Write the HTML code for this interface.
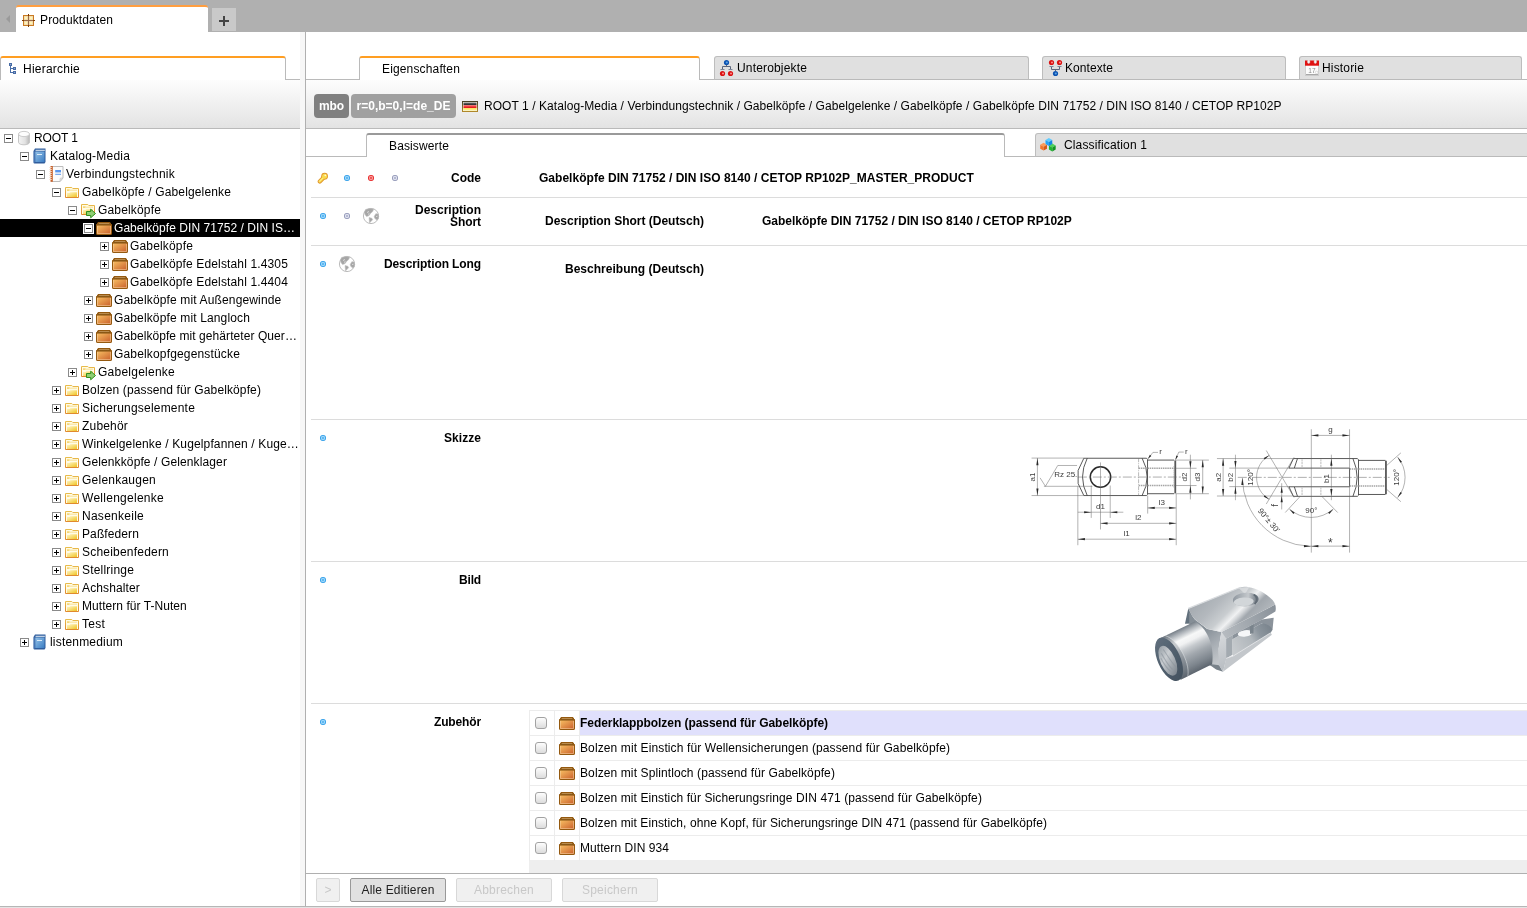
<!DOCTYPE html>
<html lang="de"><head><meta charset="utf-8"><title>Produktdaten</title>
<style>
html,body{margin:0;padding:0;}
body{width:1527px;height:908px;overflow:hidden;background:#fff;position:relative;font-family:"Liberation Sans",sans-serif;font-size:12px;color:#000;}
div,span,i,svg{position:absolute;box-sizing:border-box;}
span,div{white-space:nowrap;}
#app{left:0;top:0;width:1527px;height:908px;will-change:transform;background:#fff;}
.defs{width:0;height:0;overflow:hidden;}
/* top bar */
#topbar{left:0;top:0;width:1527px;height:32px;background:#b0b0b0;}
#maintab{left:16px;top:5px;width:192px;height:27px;background:#fff;border-top:2px solid #ff9e40;border-radius:3px 3px 0 0;}
#maintab .lbl{left:24px;top:6px;line-height:14px;}
#plus{left:212px;top:8px;width:24px;height:23px;background:#c9c9c9;}
#plus i{background:#444;}
#larr{left:6px;top:15px;width:0;height:0;border-right:4px solid #9a9a9a;border-top:4px solid transparent;border-bottom:4px solid transparent;}
/* left panel */
#lsplit{left:300px;top:32px;width:5px;height:874px;background:#f7f7f7;}
#lsplitb{left:305px;top:32px;width:1px;height:874px;background:#b0b0b0;}
#htab{left:0;top:56px;width:286px;height:24px;border-top:2px solid #ff9e22;border-right:1px solid #bababa;border-left:1px solid #bababa;border-radius:3px 3px 0 0;background:#fff;}
#htab .lbl{left:22px;top:4px;line-height:14px;}
#htabline{left:285px;top:79px;width:15px;height:1px;background:#bababa;}
#ltool{left:0;top:80px;width:300px;height:48px;background:linear-gradient(#fdfdfd,#e3e3e3);}
#ltoolb{left:0;top:128px;width:300px;height:1px;background:#bababa;}
.trow{left:0;width:300px;height:18px;}
.trow.sel{background:#000;color:#fff;}
.exp{top:5px;width:9px;height:9px;border:1px solid #8a8a8a;background:#fff;}
.sel .exp{outline:1px solid #fff;}
.exp .h{left:1px;top:3px;width:5px;height:1px;background:#000;}
.exp .v{left:3px;top:1px;width:1px;height:5px;background:#000;}
.tic{top:0;}
.ttx{top:2px;line-height:14px;}
/* right panel */
.tabline{height:1px;background:#bababa;}
#etab{left:359px;top:56px;width:341px;height:24px;border-top:2px solid #ff9e22;border-left:1px solid #bababa;border-right:1px solid #bababa;border-radius:3px 3px 0 0;background:#fff;}
#etab .lbl{left:22px;top:4px;line-height:14px;}
.gtab{top:56px;height:24px;background:#e0e0e0;border:1px solid #bdbdbd;border-bottom:1px solid #bababa;border-radius:3px 3px 0 0;}
.gtab .lbl{top:4px;line-height:14px;}
#rtool{left:306px;top:80px;width:1221px;height:48px;background:linear-gradient(#fdfdfd,#e3e3e3);}
#rtoolb{left:306px;top:128px;width:1221px;height:1px;background:#bababa;}
.badge{top:94px;height:24px;border-radius:4px;color:#fff;font-weight:bold;line-height:24px;text-align:center;}
#crumb{left:484px;top:99px;line-height:14px;}
#btab{left:366px;top:133px;width:639px;height:24px;border-top:2px solid #9a9a9a;border-left:1px solid #bababa;border-right:1px solid #bababa;border-radius:3px 3px 0 0;background:#fff;}
#btab .lbl{left:22px;top:4px;line-height:14px;}
#ctab{left:1035px;top:133px;width:500px;height:24px;background:#e0e0e0;border:1px solid #bdbdbd;border-bottom:1px solid #bababa;border-radius:3px 0 0 0;}
#ctab .lbl{left:28px;top:4px;line-height:14px;}
.sep{left:311px;width:1216px;height:1px;background:#dcdcdc;}
.lab{font-weight:bold;text-align:right;line-height:12px;}
.b{font-weight:bold;}
.dot{width:6px;height:6px;border-radius:50%;}
.dot.bl{background:radial-gradient(circle,#62b8f0 0,#62b8f0 18%,#9ad6fa 34%,#9ad6fa 44%,#2599e8 62%,#168ce0 100%);}
.dot.rd{background:radial-gradient(circle,#f05a5a 0,#f05a5a 18%,#f89a9a 34%,#f89a9a 44%,#e61a1a 62%,#dc0c0c 100%);}
.dot.gr{background:radial-gradient(circle,#b4b9d2 0,#b4b9d2 18%,#dfe1ee 34%,#dfe1ee 44%,#8a90b2 62%,#7c83a8 100%);}
/* accessories */
#atab{left:529px;top:710px;width:998px;height:163px;background:#eee;}
.arow{left:529px;width:998px;height:25px;background:#fff;border-top:1px solid #ececec;}
.arow .cb{left:6px;top:6px;width:12px;height:12px;border:1px solid #a2a2a2;border-radius:3px;background:linear-gradient(#fdfdfd,#dcdcdc);}
.arow .aic{left:30px;top:3px;}
.arow .atx{left:51px;top:5px;line-height:14px;}
.arow.first .atx{font-weight:bold;}
.arow .hl{display:none;}
.arow.first .hl{display:block;left:51px;top:0;width:947px;height:24px;background:#e0e0fc;}
.vline{width:1px;background:#ececec;top:710px;height:151px;}
/* bottom bar */
#bbar{left:306px;top:873px;width:1221px;height:1px;background:#b0b0b0;}
.btn{top:878px;height:24px;border:1px solid #d8d8d8;background:#f0f0f0;color:#c8c8c8;border-radius:2px;line-height:22px;text-align:center;}
.btn.on{border-color:#999;background:#e1e1e1;color:#222;}
#botline{left:0;top:906px;width:1527px;height:2px;background:linear-gradient(#b6b6b6 50%,#e4e4e4 50%);}

</style></head>
<body>
<svg class="defs" width="0" height="0" aria-hidden="true"><defs>
<linearGradient id="g-box" x1="0" y1="0" x2="1" y2="1"><stop offset="0" stop-color="#f7bd62"/><stop offset="1" stop-color="#c9602c"/></linearGradient>
<linearGradient id="g-boxt" x1="0" y1="0" x2="0" y2="1"><stop offset="0" stop-color="#7e4d0e"/><stop offset="1" stop-color="#c48a3c"/></linearGradient>
<linearGradient id="g-fold" x1="0" y1="0" x2="1" y2="1"><stop offset="0" stop-color="#fff6c8"/><stop offset="1" stop-color="#f0c524"/></linearGradient>
<linearGradient id="g-folds" x1="0" y1="0" x2="0" y2="1"><stop offset="0" stop-color="#e8bc4c"/><stop offset="1" stop-color="#e08a2e"/></linearGradient>
<linearGradient id="g-book" x1="0" y1="0" x2="1" y2="1"><stop offset="0" stop-color="#94c2e8"/><stop offset="1" stop-color="#3a7cc2"/></linearGradient>
<linearGradient id="g-cyl" x1="0" y1="0" x2="1" y2="0"><stop offset="0" stop-color="#f4f4f4"/><stop offset=".6" stop-color="#e2e2e2"/><stop offset="1" stop-color="#b8b8b8"/></linearGradient>
<linearGradient id="g-flagb" x1="0" y1="0" x2="0" y2="1"><stop offset="0" stop-color="#4a4226"/><stop offset="1" stop-color="#b0882a"/></linearGradient>
<linearGradient id="g-fk" x1="0" y1="0" x2="0" y2="1"><stop offset="0" stop-color="#7a7a7a"/><stop offset="1" stop-color="#1c1c1c"/></linearGradient>
<linearGradient id="g-fr" x1="0" y1="0" x2="0" y2="1"><stop offset="0" stop-color="#ff6a6a"/><stop offset="1" stop-color="#e00c0c"/></linearGradient>
<linearGradient id="g-fy" x1="0" y1="0" x2="0" y2="1"><stop offset="0" stop-color="#ffe24a"/><stop offset="1" stop-color="#fff6a0"/></linearGradient>
</defs></svg>

<div id="app">
<div id="topbar"></div>
<div id="larr"></div>
<div id="maintab"><svg style="left:6px;top:7px" width="14" height="14" viewBox="0 0 14 14"><rect x="1.500" y="1.500" width="10" height="10" fill="#f3d9ae" stroke="#c97a22"/><circle cx="4" cy="4" r="1.300" fill="#fff5b4"/><circle cx="9" cy="4" r="1.300" fill="#fff5b4"/><circle cx="4" cy="9" r="1.300" fill="#fff5b4"/><circle cx="9" cy="9" r="1.300" fill="#fff5b4"/><path d="M6 1h1v11h-1zM1 6h11v1h-11z" fill="#9a6a48"/><path d="M6 0h1v2h-1zM6 11h1v2h-1zM0 6h2v1h-2zM11 6h2v1h-2z" fill="#7c3c04"/></svg><span class="lbl" style="letter-spacing:0.135px">Produktdaten</span></div>
<div id="plus"><i style="left:7px;top:12px;width:10px;height:2px"></i><i style="left:11px;top:8px;width:2px;height:10px"></i></div>

<div id="htab"><svg style="left:7px;top:5px" width="10" height="13" viewBox="0 0 10 13"><path d="M2 3h1v7h-1zM3 5h2v1h-2zM3 9h2v1h-2z" fill="#4a6fa8"/><path d="M1 0h3v3h-3zM5 4h3v3h-3zM5 8h3v3h-3z" fill="#486ca6"/><path d="M2 1h1v1h-1zM6 5h1v1h-1zM6 9h1v1h-1z" fill="#8fa9d0"/></svg><span class="lbl" style="letter-spacing:0.231px">Hierarchie</span></div>
<div id="htabline"></div>
<div id="ltool"></div><div id="ltoolb"></div>
<div class="trow" style="top:129px"><span class="exp" style="left:4px"><i class="h"></i></span><svg class="tic" style="left:16px" width="16" height="18" viewBox="0 0 16 18"><path d="M2.500 5v8.300c0 1.500 2.500 2.500 5.500 2.500s5.500-1 5.500-2.500v-8.300" fill="url(#g-cyl)" stroke="#c6c6c6"/><ellipse cx="8" cy="5" rx="5.500" ry="2.600" fill="#fdfdfd" stroke="#cccccc"/></svg><span class="ttx" style="left:34px;letter-spacing:-0.112px">ROOT 1</span></div>
<div class="trow" style="top:147px"><span class="exp" style="left:20px"><i class="h"></i></span><svg class="tic" style="left:32px" width="16" height="18" viewBox="0 0 16 18"><path d="M3 1.500h10.500v13.500l-1 1.500h-10a1 1 0 0 1-1-1v-11.500z" fill="#2f5c9c"/><path d="M3.300 2.500h9.700v1.400h-10.300z" fill="#3a68a8"/><path d="M3.600 3.300h9.200" stroke="#f4f8fc" stroke-width=".9"/><rect x="3.300" y="4.500" width="9.200" height="10.500" fill="url(#g-book)"/><path d="M2.200 4.500v11" stroke="#5a8cc8" stroke-width=".8"/><rect x="5" y="7" width="5" height="1" fill="#dcecf8"/></svg><span class="ttx" style="left:50px;letter-spacing:0.202px">Katalog-Media</span></div>
<div class="trow" style="top:165px"><span class="exp" style="left:36px"><i class="h"></i></span><svg class="tic" style="left:48px" width="16" height="18" viewBox="0 0 16 18"><path d="M3.500 1.500h11.500v11.500l-3 3.500h-8.500z" fill="#fbfbfb" stroke="#bcbcbc"/><path d="M15 13l-3 3.500v-2.500a1 1 0 0 1 1-1z" fill="#e2e2e2" stroke="#c0c0c0" stroke-width=".6"/><rect x="2.500" y="1" width="2.300" height="15.800" fill="#c8602a"/><path d="M1.200 2.500h2.600M1.200 4.500h2.600M1.200 6.500h2.600M1.200 8.500h2.600M1.200 10.500h2.600M1.200 12.500h2.600M1.200 14.500h2.600" stroke="#f6e2d0" stroke-width=".9"/><rect x="7.200" y="5" width="5.800" height="2.400" fill="#5a96ec"/><rect x="7.200" y="8.800" width="5.800" height="1" fill="#5a96ec"/></svg><span class="ttx" style="left:66px;letter-spacing:0.237px">Verbindungstechnik</span></div>
<div class="trow" style="top:183px"><span class="exp" style="left:52px"><i class="h"></i></span><svg class="tic" style="left:64px" width="16" height="18" viewBox="0 0 16 18"><path d="M1.500 4.500h6.300l1 1h5.700v9h-13z" fill="#fffbe6" stroke="url(#g-folds)"/><path d="M3 6.200h2.300l.5.600h7.200v.8h-7.600l-.5.500h-1.900z" fill="#f6d777"/><path d="M3 10h2.600l.7-.7h6.700v4.700h-10z" fill="url(#g-fold)"/></svg><span class="ttx" style="left:82px;letter-spacing:0.143px">Gabelköpfe / Gabelgelenke</span></div>
<div class="trow" style="top:201px"><span class="exp" style="left:68px"><i class="h"></i></span><svg class="tic" style="left:80px" width="16" height="18" viewBox="0 0 16 18"><path d="M1.500 3.500h6.300l1 1h5.700v9h-13z" fill="#fffbe6" stroke="url(#g-folds)"/><path d="M3 5.200h2.300l.5.600h7.200v.8h-7.600l-.5.500h-1.900z" fill="#f6d777"/><path d="M3 9h2.600l.7-.7h6.700v4.700h-10z" fill="url(#g-fold)"/><path d="M6.500 10.500h4.200v-2.300l4.800 4.300-4.800 4.300v-2.300h-4.200z" fill="#8fce72" stroke="#2f8f1c" stroke-linejoin="round"/></svg><span class="ttx" style="left:98px;letter-spacing:0.162px">Gabelköpfe</span></div>
<div class="trow sel" style="top:219px"><span class="exp" style="left:84px"><i class="h"></i></span><svg class="tic" style="left:96px" width="16" height="18" viewBox="0 0 16 18"><path d="M2.200 3.500h11.600l1.700 2.600v8.400a1 1 0 0 1-1 1h-13a1 1 0 0 1-1-1v-8.400z" fill="url(#g-boxt)" stroke="#94590f"/><path d="M2.600 4.500h10.800" stroke="#c79a5e" stroke-width=".8" fill="none"/><rect x="1" y="6.600" width="14" height="8.400" fill="url(#g-box)"/><path d="M1.500 7v7.500h13v-7.500" fill="none" stroke="#f6d2a2" stroke-opacity=".55"/><path d="M2.200 3.500h11.600l1.700 2.600v8.400a1 1 0 0 1-1 1h-13a1 1 0 0 1-1-1v-8.400z" fill="none" stroke="#94590f"/></svg><span class="ttx" style="left:114px;letter-spacing:0.053px">Gabelköpfe DIN 71752 / DIN IS…</span></div>
<div class="trow" style="top:237px"><span class="exp" style="left:100px"><i class="h"></i><i class="v"></i></span><svg class="tic" style="left:112px" width="16" height="18" viewBox="0 0 16 18"><path d="M2.200 3.500h11.600l1.700 2.600v8.400a1 1 0 0 1-1 1h-13a1 1 0 0 1-1-1v-8.400z" fill="url(#g-boxt)" stroke="#94590f"/><path d="M2.600 4.500h10.800" stroke="#c79a5e" stroke-width=".8" fill="none"/><rect x="1" y="6.600" width="14" height="8.400" fill="url(#g-box)"/><path d="M1.500 7v7.500h13v-7.500" fill="none" stroke="#f6d2a2" stroke-opacity=".55"/><path d="M2.200 3.500h11.600l1.700 2.600v8.400a1 1 0 0 1-1 1h-13a1 1 0 0 1-1-1v-8.400z" fill="none" stroke="#94590f"/></svg><span class="ttx" style="left:130px;letter-spacing:0.162px">Gabelköpfe</span></div>
<div class="trow" style="top:255px"><span class="exp" style="left:100px"><i class="h"></i><i class="v"></i></span><svg class="tic" style="left:112px" width="16" height="18" viewBox="0 0 16 18"><path d="M2.200 3.500h11.600l1.700 2.600v8.400a1 1 0 0 1-1 1h-13a1 1 0 0 1-1-1v-8.400z" fill="url(#g-boxt)" stroke="#94590f"/><path d="M2.600 4.500h10.800" stroke="#c79a5e" stroke-width=".8" fill="none"/><rect x="1" y="6.600" width="14" height="8.400" fill="url(#g-box)"/><path d="M1.500 7v7.500h13v-7.500" fill="none" stroke="#f6d2a2" stroke-opacity=".55"/><path d="M2.200 3.500h11.600l1.700 2.600v8.400a1 1 0 0 1-1 1h-13a1 1 0 0 1-1-1v-8.400z" fill="none" stroke="#94590f"/></svg><span class="ttx" style="left:130px;letter-spacing:0.144px">Gabelköpfe Edelstahl 1.4305</span></div>
<div class="trow" style="top:273px"><span class="exp" style="left:100px"><i class="h"></i><i class="v"></i></span><svg class="tic" style="left:112px" width="16" height="18" viewBox="0 0 16 18"><path d="M2.200 3.500h11.600l1.700 2.600v8.400a1 1 0 0 1-1 1h-13a1 1 0 0 1-1-1v-8.400z" fill="url(#g-boxt)" stroke="#94590f"/><path d="M2.600 4.500h10.800" stroke="#c79a5e" stroke-width=".8" fill="none"/><rect x="1" y="6.600" width="14" height="8.400" fill="url(#g-box)"/><path d="M1.500 7v7.500h13v-7.500" fill="none" stroke="#f6d2a2" stroke-opacity=".55"/><path d="M2.200 3.500h11.600l1.700 2.600v8.400a1 1 0 0 1-1 1h-13a1 1 0 0 1-1-1v-8.400z" fill="none" stroke="#94590f"/></svg><span class="ttx" style="left:130px;letter-spacing:0.144px">Gabelköpfe Edelstahl 1.4404</span></div>
<div class="trow" style="top:291px"><span class="exp" style="left:84px"><i class="h"></i><i class="v"></i></span><svg class="tic" style="left:96px" width="16" height="18" viewBox="0 0 16 18"><path d="M2.200 3.500h11.600l1.700 2.600v8.400a1 1 0 0 1-1 1h-13a1 1 0 0 1-1-1v-8.400z" fill="url(#g-boxt)" stroke="#94590f"/><path d="M2.600 4.500h10.800" stroke="#c79a5e" stroke-width=".8" fill="none"/><rect x="1" y="6.600" width="14" height="8.400" fill="url(#g-box)"/><path d="M1.500 7v7.500h13v-7.500" fill="none" stroke="#f6d2a2" stroke-opacity=".55"/><path d="M2.200 3.500h11.600l1.700 2.600v8.400a1 1 0 0 1-1 1h-13a1 1 0 0 1-1-1v-8.400z" fill="none" stroke="#94590f"/></svg><span class="ttx" style="left:114px;letter-spacing:0.145px">Gabelköpfe mit Außengewinde</span></div>
<div class="trow" style="top:309px"><span class="exp" style="left:84px"><i class="h"></i><i class="v"></i></span><svg class="tic" style="left:96px" width="16" height="18" viewBox="0 0 16 18"><path d="M2.200 3.500h11.600l1.700 2.600v8.400a1 1 0 0 1-1 1h-13a1 1 0 0 1-1-1v-8.400z" fill="url(#g-boxt)" stroke="#94590f"/><path d="M2.600 4.500h10.800" stroke="#c79a5e" stroke-width=".8" fill="none"/><rect x="1" y="6.600" width="14" height="8.400" fill="url(#g-box)"/><path d="M1.500 7v7.500h13v-7.500" fill="none" stroke="#f6d2a2" stroke-opacity=".55"/><path d="M2.200 3.500h11.600l1.700 2.600v8.400a1 1 0 0 1-1 1h-13a1 1 0 0 1-1-1v-8.400z" fill="none" stroke="#94590f"/></svg><span class="ttx" style="left:114px;letter-spacing:0.141px">Gabelköpfe mit Langloch</span></div>
<div class="trow" style="top:327px"><span class="exp" style="left:84px"><i class="h"></i><i class="v"></i></span><svg class="tic" style="left:96px" width="16" height="18" viewBox="0 0 16 18"><path d="M2.200 3.500h11.600l1.700 2.600v8.400a1 1 0 0 1-1 1h-13a1 1 0 0 1-1-1v-8.400z" fill="url(#g-boxt)" stroke="#94590f"/><path d="M2.600 4.500h10.800" stroke="#c79a5e" stroke-width=".8" fill="none"/><rect x="1" y="6.600" width="14" height="8.400" fill="url(#g-box)"/><path d="M1.500 7v7.500h13v-7.500" fill="none" stroke="#f6d2a2" stroke-opacity=".55"/><path d="M2.200 3.500h11.600l1.700 2.600v8.400a1 1 0 0 1-1 1h-13a1 1 0 0 1-1-1v-8.400z" fill="none" stroke="#94590f"/></svg><span class="ttx" style="left:114px;letter-spacing:0.072px">Gabelköpfe mit gehärteter Quer…</span></div>
<div class="trow" style="top:345px"><span class="exp" style="left:84px"><i class="h"></i><i class="v"></i></span><svg class="tic" style="left:96px" width="16" height="18" viewBox="0 0 16 18"><path d="M2.200 3.500h11.600l1.700 2.600v8.400a1 1 0 0 1-1 1h-13a1 1 0 0 1-1-1v-8.400z" fill="url(#g-boxt)" stroke="#94590f"/><path d="M2.600 4.500h10.800" stroke="#c79a5e" stroke-width=".8" fill="none"/><rect x="1" y="6.600" width="14" height="8.400" fill="url(#g-box)"/><path d="M1.500 7v7.500h13v-7.500" fill="none" stroke="#f6d2a2" stroke-opacity=".55"/><path d="M2.200 3.500h11.600l1.700 2.600v8.400a1 1 0 0 1-1 1h-13a1 1 0 0 1-1-1v-8.400z" fill="none" stroke="#94590f"/></svg><span class="ttx" style="left:114px;letter-spacing:0.162px">Gabelkopfgegenstücke</span></div>
<div class="trow" style="top:363px"><span class="exp" style="left:68px"><i class="h"></i><i class="v"></i></span><svg class="tic" style="left:80px" width="16" height="18" viewBox="0 0 16 18"><path d="M1.500 3.500h6.300l1 1h5.700v9h-13z" fill="#fffbe6" stroke="url(#g-folds)"/><path d="M3 5.200h2.300l.5.600h7.200v.8h-7.600l-.5.500h-1.900z" fill="#f6d777"/><path d="M3 9h2.600l.7-.7h6.700v4.700h-10z" fill="url(#g-fold)"/><path d="M6.500 10.500h4.200v-2.300l4.800 4.300-4.800 4.300v-2.300h-4.200z" fill="#8fce72" stroke="#2f8f1c" stroke-linejoin="round"/></svg><span class="ttx" style="left:98px;letter-spacing:0.245px">Gabelgelenke</span></div>
<div class="trow" style="top:381px"><span class="exp" style="left:52px"><i class="h"></i><i class="v"></i></span><svg class="tic" style="left:64px" width="16" height="18" viewBox="0 0 16 18"><path d="M1.500 4.500h6.300l1 1h5.700v9h-13z" fill="#fffbe6" stroke="url(#g-folds)"/><path d="M3 6.200h2.300l.5.600h7.200v.8h-7.600l-.5.500h-1.900z" fill="#f6d777"/><path d="M3 10h2.600l.7-.7h6.700v4.700h-10z" fill="url(#g-fold)"/></svg><span class="ttx" style="left:82px;letter-spacing:0.115px">Bolzen (passend für Gabelköpfe)</span></div>
<div class="trow" style="top:399px"><span class="exp" style="left:52px"><i class="h"></i><i class="v"></i></span><svg class="tic" style="left:64px" width="16" height="18" viewBox="0 0 16 18"><path d="M1.500 4.500h6.300l1 1h5.700v9h-13z" fill="#fffbe6" stroke="url(#g-folds)"/><path d="M3 6.200h2.300l.5.600h7.200v.8h-7.600l-.5.500h-1.900z" fill="#f6d777"/><path d="M3 10h2.600l.7-.7h6.700v4.700h-10z" fill="url(#g-fold)"/></svg><span class="ttx" style="left:82px;letter-spacing:0.200px">Sicherungselemente</span></div>
<div class="trow" style="top:417px"><span class="exp" style="left:52px"><i class="h"></i><i class="v"></i></span><svg class="tic" style="left:64px" width="16" height="18" viewBox="0 0 16 18"><path d="M1.500 4.500h6.300l1 1h5.700v9h-13z" fill="#fffbe6" stroke="url(#g-folds)"/><path d="M3 6.200h2.300l.5.600h7.200v.8h-7.600l-.5.500h-1.900z" fill="#f6d777"/><path d="M3 10h2.600l.7-.7h6.700v4.700h-10z" fill="url(#g-fold)"/></svg><span class="ttx" style="left:82px;letter-spacing:0.186px">Zubehör</span></div>
<div class="trow" style="top:435px"><span class="exp" style="left:52px"><i class="h"></i><i class="v"></i></span><svg class="tic" style="left:64px" width="16" height="18" viewBox="0 0 16 18"><path d="M1.500 4.500h6.300l1 1h5.700v9h-13z" fill="#fffbe6" stroke="url(#g-folds)"/><path d="M3 6.200h2.300l.5.600h7.200v.8h-7.600l-.5.500h-1.900z" fill="#f6d777"/><path d="M3 10h2.600l.7-.7h6.700v4.700h-10z" fill="url(#g-fold)"/></svg><span class="ttx" style="left:82px;letter-spacing:0.135px">Winkelgelenke / Kugelpfannen / Kuge…</span></div>
<div class="trow" style="top:453px"><span class="exp" style="left:52px"><i class="h"></i><i class="v"></i></span><svg class="tic" style="left:64px" width="16" height="18" viewBox="0 0 16 18"><path d="M1.500 4.500h6.300l1 1h5.700v9h-13z" fill="#fffbe6" stroke="url(#g-folds)"/><path d="M3 6.200h2.300l.5.600h7.200v.8h-7.600l-.5.500h-1.900z" fill="#f6d777"/><path d="M3 10h2.600l.7-.7h6.700v4.700h-10z" fill="url(#g-fold)"/></svg><span class="ttx" style="left:82px;letter-spacing:0.117px">Gelenkköpfe / Gelenklager</span></div>
<div class="trow" style="top:471px"><span class="exp" style="left:52px"><i class="h"></i><i class="v"></i></span><svg class="tic" style="left:64px" width="16" height="18" viewBox="0 0 16 18"><path d="M1.500 4.500h6.300l1 1h5.700v9h-13z" fill="#fffbe6" stroke="url(#g-folds)"/><path d="M3 6.200h2.300l.5.600h7.200v.8h-7.600l-.5.500h-1.900z" fill="#f6d777"/><path d="M3 10h2.600l.7-.7h6.700v4.700h-10z" fill="url(#g-fold)"/></svg><span class="ttx" style="left:82px;letter-spacing:0.237px">Gelenkaugen</span></div>
<div class="trow" style="top:489px"><span class="exp" style="left:52px"><i class="h"></i><i class="v"></i></span><svg class="tic" style="left:64px" width="16" height="18" viewBox="0 0 16 18"><path d="M1.500 4.500h6.300l1 1h5.700v9h-13z" fill="#fffbe6" stroke="url(#g-folds)"/><path d="M3 6.200h2.300l.5.600h7.200v.8h-7.600l-.5.500h-1.900z" fill="#f6d777"/><path d="M3 10h2.600l.7-.7h6.700v4.700h-10z" fill="url(#g-fold)"/></svg><span class="ttx" style="left:82px;letter-spacing:0.269px">Wellengelenke</span></div>
<div class="trow" style="top:507px"><span class="exp" style="left:52px"><i class="h"></i><i class="v"></i></span><svg class="tic" style="left:64px" width="16" height="18" viewBox="0 0 16 18"><path d="M1.500 4.500h6.300l1 1h5.700v9h-13z" fill="#fffbe6" stroke="url(#g-folds)"/><path d="M3 6.200h2.300l.5.600h7.200v.8h-7.600l-.5.500h-1.900z" fill="#f6d777"/><path d="M3 10h2.600l.7-.7h6.700v4.700h-10z" fill="url(#g-fold)"/></svg><span class="ttx" style="left:82px;letter-spacing:0.263px">Nasenkeile</span></div>
<div class="trow" style="top:525px"><span class="exp" style="left:52px"><i class="h"></i><i class="v"></i></span><svg class="tic" style="left:64px" width="16" height="18" viewBox="0 0 16 18"><path d="M1.500 4.500h6.300l1 1h5.700v9h-13z" fill="#fffbe6" stroke="url(#g-folds)"/><path d="M3 6.200h2.300l.5.600h7.200v.8h-7.600l-.5.500h-1.900z" fill="#f6d777"/><path d="M3 10h2.600l.7-.7h6.700v4.700h-10z" fill="url(#g-fold)"/></svg><span class="ttx" style="left:82px;letter-spacing:0.107px">Paßfedern</span></div>
<div class="trow" style="top:543px"><span class="exp" style="left:52px"><i class="h"></i><i class="v"></i></span><svg class="tic" style="left:64px" width="16" height="18" viewBox="0 0 16 18"><path d="M1.500 4.500h6.300l1 1h5.700v9h-13z" fill="#fffbe6" stroke="url(#g-folds)"/><path d="M3 6.200h2.300l.5.600h7.200v.8h-7.600l-.5.500h-1.900z" fill="#f6d777"/><path d="M3 10h2.600l.7-.7h6.700v4.700h-10z" fill="url(#g-fold)"/></svg><span class="ttx" style="left:82px;letter-spacing:0.210px">Scheibenfedern</span></div>
<div class="trow" style="top:561px"><span class="exp" style="left:52px"><i class="h"></i><i class="v"></i></span><svg class="tic" style="left:64px" width="16" height="18" viewBox="0 0 16 18"><path d="M1.500 4.500h6.300l1 1h5.700v9h-13z" fill="#fffbe6" stroke="url(#g-folds)"/><path d="M3 6.200h2.300l.5.600h7.200v.8h-7.600l-.5.500h-1.900z" fill="#f6d777"/><path d="M3 10h2.600l.7-.7h6.700v4.700h-10z" fill="url(#g-fold)"/></svg><span class="ttx" style="left:82px;letter-spacing:0.197px">Stellringe</span></div>
<div class="trow" style="top:579px"><span class="exp" style="left:52px"><i class="h"></i><i class="v"></i></span><svg class="tic" style="left:64px" width="16" height="18" viewBox="0 0 16 18"><path d="M1.500 4.500h6.300l1 1h5.700v9h-13z" fill="#fffbe6" stroke="url(#g-folds)"/><path d="M3 6.200h2.300l.5.600h7.200v.8h-7.600l-.5.500h-1.900z" fill="#f6d777"/><path d="M3 10h2.600l.7-.7h6.700v4.700h-10z" fill="url(#g-fold)"/></svg><span class="ttx" style="left:82px;letter-spacing:0.130px">Achshalter</span></div>
<div class="trow" style="top:597px"><span class="exp" style="left:52px"><i class="h"></i><i class="v"></i></span><svg class="tic" style="left:64px" width="16" height="18" viewBox="0 0 16 18"><path d="M1.500 4.500h6.300l1 1h5.700v9h-13z" fill="#fffbe6" stroke="url(#g-folds)"/><path d="M3 6.200h2.300l.5.600h7.200v.8h-7.600l-.5.500h-1.900z" fill="#f6d777"/><path d="M3 10h2.600l.7-.7h6.700v4.700h-10z" fill="url(#g-fold)"/></svg><span class="ttx" style="left:82px;letter-spacing:0.051px">Muttern für T-Nuten</span></div>
<div class="trow" style="top:615px"><span class="exp" style="left:52px"><i class="h"></i><i class="v"></i></span><svg class="tic" style="left:64px" width="16" height="18" viewBox="0 0 16 18"><path d="M1.500 4.500h6.300l1 1h5.700v9h-13z" fill="#fffbe6" stroke="url(#g-folds)"/><path d="M3 6.200h2.300l.5.600h7.200v.8h-7.600l-.5.500h-1.900z" fill="#f6d777"/><path d="M3 10h2.600l.7-.7h6.700v4.700h-10z" fill="url(#g-fold)"/></svg><span class="ttx" style="left:82px;letter-spacing:0.244px">Test</span></div>
<div class="trow" style="top:633px"><span class="exp" style="left:20px"><i class="h"></i><i class="v"></i></span><svg class="tic" style="left:32px" width="16" height="18" viewBox="0 0 16 18"><path d="M3 1.500h10.500v13.500l-1 1.500h-10a1 1 0 0 1-1-1v-11.500z" fill="#2f5c9c"/><path d="M3.300 2.500h9.700v1.400h-10.300z" fill="#3a68a8"/><path d="M3.600 3.300h9.200" stroke="#f4f8fc" stroke-width=".9"/><rect x="3.300" y="4.500" width="9.200" height="10.500" fill="url(#g-book)"/><path d="M2.200 4.500v11" stroke="#5a8cc8" stroke-width=".8"/><rect x="5" y="7" width="5" height="1" fill="#dcecf8"/></svg><span class="ttx" style="left:50px;letter-spacing:0.192px">listenmedium</span></div>
<div id="lsplit"></div><div id="lsplitb"></div>

<div class="tabline" style="left:306px;top:79px;width:1221px"></div>
<div id="etab"><span class="lbl" style="letter-spacing:0.150px">Eigenschaften</span></div>
<div class="gtab" style="left:714px;width:315px"><svg style="left:4px;top:2px" width="16" height="18" viewBox="0 0 16 18"><path d="M7.500 6v1.500M3.500 10.500v-3h8v3" fill="none" stroke="#5c667c" stroke-width="1"/><path d="M1.500 10.500h4M9.500 10.500h4" fill="none" stroke="#7c8698" stroke-width="1"/><circle cx="7.500" cy="3.500" r="2.600" fill="#0c52b2"/><circle cx="7.800" cy="3.500" r="1.100" fill="#5aa4e2"/><circle cx="3.500" cy="14.500" r="2.600" fill="#da1212"/><circle cx="4" cy="14.500" r="1" fill="#ff8c8c"/><circle cx="11.500" cy="14.500" r="2.600" fill="#da1212"/><circle cx="12" cy="14.500" r="1" fill="#ff8c8c"/></svg><span class="lbl" style="letter-spacing:0.163px;left:22px">Unterobjekte</span></div>
<div class="gtab" style="left:1042px;width:244px"><svg style="left:5px;top:2px" width="16" height="18" viewBox="0 0 16 18"><path d="M7.500 12v-1.500M3.500 7.500v3h8v-3" fill="none" stroke="#5c667c" stroke-width="1"/><path d="M1.500 7.500h4M9.500 7.500h4" fill="none" stroke="#7c8698" stroke-width="1"/><circle cx="7.500" cy="14.500" r="2.600" fill="#0c52b2"/><circle cx="7.800" cy="14.500" r="1.100" fill="#5aa4e2"/><circle cx="3.500" cy="3.500" r="2.600" fill="#da1212"/><circle cx="4" cy="3.500" r="1" fill="#ff8c8c"/><circle cx="11.500" cy="3.500" r="2.600" fill="#da1212"/><circle cx="12" cy="3.500" r="1" fill="#ff8c8c"/></svg><span class="lbl" style="letter-spacing:0.079px;left:22px">Kontexte</span></div>
<div class="gtab" style="left:1299px;width:223px"><svg style="left:4px;top:3px" width="16" height="16" viewBox="0 0 16 16"><rect x="1" y="1" width="14" height="14.500" fill="#fcfcfc"/><rect x="1" y="14" width="14" height="1.500" fill="#a8a8a8"/><path d="M1.500 1v14" stroke="#d0d0d0"/><path d="M14.500 1v14" stroke="#d0d0d0"/><rect x="1" y=".5" width="14" height="5.200" fill="#e01212"/><rect x="3.500" y="0" width="2.400" height="3.400" rx="1.100" fill="#f2f2f2" stroke="#d8d8d8" stroke-width=".4"/><rect x="10.100" y="0" width="2.400" height="3.400" rx="1.100" fill="#f2f2f2" stroke="#d8d8d8" stroke-width=".4"/><text x="4.300" y="12.600" font-family="Liberation Sans,sans-serif" font-size="6.500" fill="#8a8a8a">17</text><circle cx="12.600" cy="12.400" r="1.300" fill="#fff" stroke="#c8c8c8" stroke-width=".6"/></svg><span class="lbl" style="letter-spacing:0.166px;left:22px">Historie</span></div>
<div id="rtool"></div><div id="rtoolb"></div>
<div class="badge" style="letter-spacing:-0.110px;left:314px;width:35px;background:#808080">mbo</div>
<div class="badge" style="letter-spacing:0.019px;left:351px;width:105px;background:#a0a0a0">r=0,b=0,l=de_DE</div>
<svg style="left:462px;top:101px" width="16" height="11" viewBox="0 0 16 11"><rect x=".5" y=".5" width="15" height="10" fill="#f4f0dc" stroke="url(#g-flagb)"/><rect x="1.500" y="1.500" width="13" height="2.700" fill="url(#g-fk)"/><rect x="1.500" y="4.200" width="13" height="2.900" fill="url(#g-fr)"/><rect x="1.500" y="7.100" width="13" height="2.400" fill="url(#g-fy)"/></svg>
<span id="crumb" style="letter-spacing:0.062px">ROOT 1 / Katalog-Media / Verbindungstechnik / Gabelköpfe / Gabelgelenke / Gabelköpfe / Gabelköpfe DIN 71752 / DIN ISO 8140 / CETOP RP102P</span>

<div class="tabline" style="left:306px;top:156px;width:1221px"></div>
<div id="btab"><span class="lbl" style="letter-spacing:0.131px">Basiswerte</span></div>
<div id="ctab"><svg style="left:4px;top:3px" width="16" height="16" viewBox="0 0 16 16"><path d="M3.60 5.80 L6.98 7.75 L3.60 9.70 L0.22 7.75z" fill="#ff9c58"/><path d="M0.22 7.75 L3.60 9.70 L3.60 13.60 L0.22 11.65z" fill="#f4762a"/><path d="M6.98 7.75 L3.60 9.70 L3.60 13.60 L6.98 11.65z" fill="#d85a14"/><path d="M12.30 6.60 L15.68 8.55 L12.30 10.50 L8.92 8.55z" fill="#4fd25a"/><path d="M8.92 8.55 L12.30 10.50 L12.30 14.40 L8.92 12.45z" fill="#1fb430"/><path d="M15.68 8.55 L12.30 10.50 L12.30 14.40 L15.68 12.45z" fill="#129422"/><path d="M8.90 1.10 L12.28 3.05 L8.90 5.00 L5.52 3.05z" fill="#62ccff"/><path d="M5.52 3.05 L8.90 5.00 L8.90 8.90 L5.52 6.95z" fill="#22a4f8"/><path d="M12.28 3.05 L8.90 5.00 L8.90 8.90 L12.28 6.95z" fill="#1488e0"/></svg><span class="lbl" style="letter-spacing:0.144px">Classification 1</span></div>

<!-- row: Code -->
<svg style="left:317px;top:172px" width="12" height="12" viewBox="0 0 12 12"><path d="M2.800 9.400l3.700-3.700" stroke="#e0962c" stroke-width="4.200" stroke-linecap="round" fill="none"/><circle cx="7.600" cy="4.200" r="3.400" fill="#e0962c"/><path d="M2.800 9.400l3.700-3.700" stroke="#f9da4e" stroke-width="2.400" stroke-linecap="round" fill="none"/><circle cx="7.600" cy="4.200" r="2.500" fill="#f9da4e"/><circle cx="8.300" cy="3.300" r=".9" fill="#fff7d0"/><path d="M2.500 9.300l3-3" stroke="#fff2a8" stroke-width=".8" stroke-linecap="round"/></svg>
<div class="dot bl" style="left:344px;top:175px"></div>
<div class="dot rd" style="left:368px;top:175px"></div>
<div class="dot gr" style="left:392px;top:175px"></div>
<span class="lab" style="letter-spacing:0.000px;left:381px;width:100px;top:172px">Code</span>
<span class="b" style="letter-spacing:0.027px;left:539px;top:171px;line-height:14px">Gabelköpfe DIN 71752 / DIN ISO 8140 / CETOP RP102P_MASTER_PRODUCT</span>
<div class="sep" style="top:197px"></div>

<!-- row: Description Short -->
<div class="dot bl" style="left:320px;top:213px"></div>
<div class="dot gr" style="left:344px;top:213px"></div>
<svg style="left:362px;top:207px" width="18" height="18" viewBox="0 0 18 18"><circle cx="9" cy="9" r="7.600" fill="#fff" stroke="#b4b4b4" stroke-width=".9"/><path d="M3.600 2.500L8.100 1.400L11.700 2.200L10.600 4.600L8.500 6.400L7.100 8.500L4.600 9.600L3.200 7.800L2.300 5.300zM7.100 10.600L9.900 11.300L10.600 12.700L8.900 14.500L7.600 15.900L7.300 13.400zM13.800 6.700L16.200 7.100L16.700 9.600L16.200 12L14.800 13.100L12.700 11.300L12.200 9.600z" fill="#a6a6a6" stroke="#bdbdbd" stroke-width=".6"/><path d="M5 5.500l2-1M6 7.500l1.500-1.200M14 9.500l1.500-.3" stroke="#e8e8e8" stroke-width=".8"/></svg>
<span class="lab" style="letter-spacing:-0.001px;left:381px;width:100px;top:204px">Description</span>
<span class="lab" style="letter-spacing:-0.066px;left:381px;width:100px;top:216px">Short</span>
<span class="lab" style="letter-spacing:-0.013px;left:504px;width:200px;top:215px">Description Short (Deutsch)</span>
<span class="b" style="letter-spacing:0.002px;left:762px;top:214px;line-height:14px">Gabelköpfe DIN 71752 / DIN ISO 8140 / CETOP RP102P</span>
<div class="sep" style="top:245px"></div>

<!-- row: Description Long -->
<div class="dot bl" style="left:320px;top:261px"></div>
<svg style="left:338px;top:255px" width="18" height="18" viewBox="0 0 18 18"><circle cx="9" cy="9" r="7.600" fill="#fff" stroke="#b4b4b4" stroke-width=".9"/><path d="M3.600 2.500L8.100 1.400L11.700 2.200L10.600 4.600L8.500 6.400L7.100 8.500L4.600 9.600L3.200 7.800L2.300 5.300zM7.100 10.600L9.900 11.300L10.600 12.700L8.900 14.500L7.600 15.900L7.300 13.400zM13.800 6.700L16.200 7.100L16.700 9.600L16.200 12L14.800 13.100L12.700 11.300L12.200 9.600z" fill="#a6a6a6" stroke="#bdbdbd" stroke-width=".6"/><path d="M5 5.500l2-1M6 7.500l1.500-1.200M14 9.500l1.500-.3" stroke="#e8e8e8" stroke-width=".8"/></svg>
<span class="lab" style="letter-spacing:-0.104px;left:331px;width:150px;top:258px">Description Long</span>
<span class="lab" style="letter-spacing:0.014px;left:504px;width:200px;top:263px">Beschreibung (Deutsch)</span>
<div class="sep" style="top:419px"></div>

<!-- row: Skizze -->
<div class="dot bl" style="left:320px;top:435px"></div>
<span class="lab" style="letter-spacing:0.052px;left:381px;width:100px;top:432px">Skizze</span>
<svg id="sketch" style="left:1025px;top:424px" width="392" height="134" viewBox="1025 424 392 134" font-family="Liberation Sans,sans-serif" fill="#3a3a3a">
<style>#sketch path{fill:none;stroke:#3c3c3c}#sketch .th{stroke-width:.85;stroke:#3c3c3c}#sketch .th2{stroke-width:1.800;stroke:#585858}#sketch .th3{fill:none;stroke:#2a2a2a;stroke-width:1.500}#sketch .tn{stroke-width:.5;stroke:#666}#sketch .tg{stroke-width:.5;stroke:#9a9a9a}#sketch .ds{stroke-width:.6;stroke:#8a8a8a;stroke-dasharray:1.200 .8}#sketch .td{stroke-width:1.500;stroke:#a4a4a4;stroke-dasharray:1.500 .7}#sketch .cl{stroke-width:.55;stroke:#6a6a6a;stroke-dasharray:9 2 2 2}#sketch .ar{fill:#2a2a2a;stroke:none}#sketch .hd{stroke-width:1.100;stroke:#c4c4c4;stroke-dasharray:2.200 .6}#sketch .cl2{stroke-width:.5;stroke:#777;stroke-dasharray:4 1 1 1}</style>
<path class="th" d="M1083.84 458.24 L1146.60 458.24 L1147.53 459.48 L1147.53 494.48 L1146.60 495.56 L1083.84 495.56 L1078.13 483.53 L1078.13 470.42 Z"/>
<path class="th" d="M1087.23 458.24 Q1077.83 476.90 1087.23 495.56"/>
<path class="th" d="M1142.13 458.24 Q1152.15 476.90 1142.13 495.56"/>
<path class="cl2" d="M1138.58 458.24 L1138.58 495.56"/>
<path class="th" d="M1147.68 460.09 L1174.20 460.09"/>
<path class="th" d="M1147.68 493.71 L1174.20 493.71"/>
<path class="th2" d="M1175.28 460.40 L1175.28 493.40"/>
<path class="td" d="M1138.74 468.27 L1174.20 468.27"/>
<path class="td" d="M1138.74 485.54 L1174.20 485.54"/>
<path class="ds" d="M1173.89 466.26 L1173.89 487.85"/>
<circle class="th3" cx="1100.49" cy="477.05" r="10.18"/>
<path class="cl" d="M1077.83 477.05 L1181.91 477.05"/>
<path class="tn" d="M1100.49 462.41 L1100.49 529.48"/>
<path class="tn" d="M1031.57 458.09 L1083.99 458.09"/>
<path class="tn" d="M1031.57 495.56 L1083.99 495.56"/>
<path class="tn" d="M1037.42 458.09 L1037.42 495.56"/>
<path class="ar" d="M1037.42 458.09 L1038.50 465.18 L1036.35 465.18 Z"/>
<path class="ar" d="M1037.42 495.56 L1036.35 488.47 L1038.50 488.47 Z"/>
<text x="1034.96" y="477.05" font-size="8" text-anchor="middle" transform="rotate(-90 1034.96 477.05)">a1</text>
<path class="tn" d="M1040.05 477.83 L1045.44 486.31 L1057.78 465.49 L1077.05 465.49"/>
<path class="tn" d="M1043.90 486.31 L1092.47 486.31"/>
<text x="1054.23" y="476.75" font-size="8" text-anchor="start">Rz 25.</text>
<path class="tn" d="M1091.24 485.54 L1091.24 517.92"/>
<path class="tn" d="M1110.21 485.54 L1110.21 517.92"/>
<path class="tn" d="M1077.83 512.21 L1123.32 512.21"/>
<path class="ar" d="M1091.24 512.21 L1084.15 513.29 L1084.15 511.13 Z"/>
<path class="ar" d="M1110.21 512.21 L1117.30 511.13 L1117.30 513.29 Z"/>
<text x="1100.49" y="509.13" font-size="8" text-anchor="middle">d1</text>
<path class="tn" d="M1147.68 495.56 L1147.68 513.60"/>
<path class="tn" d="M1176.21 494.02 L1176.21 545.21"/>
<path class="tn" d="M1147.68 507.90 L1176.21 507.90"/>
<path class="ar" d="M1147.68 507.90 L1154.77 506.82 L1154.77 508.97 Z"/>
<path class="ar" d="M1176.21 507.90 L1169.11 508.97 L1169.11 506.82 Z"/>
<text x="1161.87" y="504.50" font-size="8" text-anchor="middle">l3</text>
<path class="tn" d="M1100.49 523.32 L1176.21 523.32"/>
<path class="ar" d="M1100.49 523.32 L1107.59 522.24 L1107.59 524.39 Z"/>
<path class="ar" d="M1176.21 523.32 L1169.11 524.39 L1169.11 522.24 Z"/>
<text x="1138.43" y="520.23" font-size="8" text-anchor="middle">l2</text>
<path class="tn" d="M1077.83 486.31 L1077.83 545.21"/>
<path class="tn" d="M1077.83 539.20 L1176.21 539.20"/>
<path class="ar" d="M1077.83 539.20 L1084.92 538.12 L1084.92 540.28 Z"/>
<path class="ar" d="M1176.21 539.20 L1169.11 540.28 L1169.11 538.12 Z"/>
<text x="1126.71" y="535.96" font-size="8" text-anchor="middle">l1</text>
<path class="tn" d="M1147.99 458.86 L1152.92 452.38 L1158.01 452.38"/>
<path class="ar" d="M1147.99 458.86 L1149.84 454.85 L1151.32 455.96 Z"/>
<text x="1160.63" y="454.23" font-size="8" text-anchor="middle">r</text>
<path class="tn" d="M1175.44 459.78 L1178.83 452.07 L1183.76 452.07"/>
<path class="ar" d="M1175.44 459.78 L1176.34 455.46 L1178.03 456.21 Z"/>
<text x="1186.23" y="453.92" font-size="8" text-anchor="middle">r</text>
<path class="tn" d="M1174.20 468.27 L1196.56 468.27"/>
<path class="tn" d="M1174.20 485.54 L1196.56 485.54"/>
<path class="tn" d="M1190.39 454.70 L1190.39 499.41"/>
<path class="ar" d="M1190.39 468.27 L1189.31 461.17 L1191.47 461.17 Z"/>
<path class="ar" d="M1190.39 485.54 L1191.47 492.63 L1189.31 492.63 Z"/>
<text x="1187.31" y="477.05" font-size="8" text-anchor="middle" transform="rotate(-90 1187.31 477.05)">d2</text>
<path class="tn" d="M1175.74 460.09 L1208.90 460.09"/>
<path class="tn" d="M1175.74 493.71 L1208.90 493.71"/>
<path class="tn" d="M1202.73 460.09 L1202.73 493.71"/>
<path class="ar" d="M1202.73 460.09 L1203.81 467.19 L1201.65 467.19 Z"/>
<path class="ar" d="M1202.73 493.71 L1201.65 486.62 L1203.81 486.62 Z"/>
<text x="1199.65" y="477.05" font-size="8" text-anchor="middle" transform="rotate(-90 1199.65 477.05)">d3</text>
<path class="th" d="M1293.42 458.55 L1357.42 458.55 L1358.50 459.78 L1358.50 495.25 L1357.42 496.33 L1293.42 496.33"/>
<path class="th" d="M1293.42 458.55 L1288.95 468.11 L1349.55 468.11 L1349.55 486.77 L1288.95 486.77 L1293.42 496.33"/>
<path class="th" d="M1297.43 458.70 L1294.35 467.96"/>
<path class="th" d="M1294.35 486.92 L1297.43 496.18"/>
<path class="th" d="M1352.95 458.55 Q1361.27 477.52 1352.95 496.33"/>
<path class="th" d="M1358.50 460.40 L1385.48 460.40"/>
<path class="th" d="M1358.50 494.48 L1385.48 494.48"/>
<path class="th2" d="M1385.94 460.71 L1385.94 494.17"/>
<path class="td" d="M1349.55 469.04 L1385.02 469.04"/>
<path class="td" d="M1349.55 486.00 L1385.02 486.00"/>
<path class="hd" d="M1302.06 459.32 L1302.06 467.80"/>
<path class="hd" d="M1302.06 487.23 L1302.06 495.71"/>
<path class="hd" d="M1320.87 459.32 L1320.87 467.80"/>
<path class="hd" d="M1320.87 487.23 L1320.87 495.71"/>
<path class="cl" d="M1237.76 477.36 L1389.65 477.36"/>
<path class="tn" d="M1311.31 429.25 L1311.31 552.61"/>
<path class="tn" d="M1349.55 429.25 L1349.55 552.61"/>
<path class="tn" d="M1311.31 435.42 L1349.55 435.42"/>
<path class="ar" d="M1311.31 435.42 L1318.40 434.34 L1318.40 436.50 Z"/>
<path class="ar" d="M1349.55 435.42 L1342.46 436.50 L1342.46 434.34 Z"/>
<text x="1330.43" y="432.03" font-size="8" text-anchor="middle">g</text>
<path class="tn" d="M1308.69 546.14 L1349.55 546.14"/>
<path class="ar" d="M1311.31 546.14 L1318.40 545.06 L1318.40 547.22 Z"/>
<path class="ar" d="M1349.55 546.14 L1342.46 547.22 L1342.46 545.06 Z"/>
<text x="1330.43" y="546.75" font-size="12" text-anchor="middle">*</text>
<path class="tn" d="M1216.94 458.55 L1293.27 458.55"/>
<path class="tn" d="M1216.94 496.02 L1293.27 496.02"/>
<path class="tn" d="M1223.11 458.55 L1223.11 496.02"/>
<path class="ar" d="M1223.11 458.55 L1224.19 465.64 L1222.03 465.64 Z"/>
<path class="ar" d="M1223.11 496.02 L1222.03 488.93 L1224.19 488.93 Z"/>
<text x="1220.79" y="477.36" font-size="8" text-anchor="middle" transform="rotate(-90 1220.79 477.36)">a2</text>
<path class="tn" d="M1229.28 468.11 L1289.41 468.11"/>
<path class="tn" d="M1229.28 486.62 L1289.41 486.62"/>
<path class="tn" d="M1235.44 454.70 L1235.44 500.19"/>
<path class="ar" d="M1235.44 468.11 L1234.36 461.02 L1236.52 461.02 Z"/>
<path class="ar" d="M1235.44 486.62 L1236.52 493.71 L1234.36 493.71 Z"/>
<text x="1233.13" y="477.36" font-size="8" text-anchor="middle" transform="rotate(-90 1233.13 477.36)">b2</text>
<path class="tn" d="M1266.28 450.53 L1294.04 497.41"/>
<path class="tn" d="M1266.28 504.04 L1294.04 457.32"/>
<path class="tn" d="M1269.29 455.33 A25.44 25.44 0 0 0 1269.29 499.39"/>
<path class="ar" d="M1269.37 455.31 L1264.81 459.57 L1263.76 458.04 Z"/>
<path class="ar" d="M1269.37 499.41 L1263.76 496.68 L1264.81 495.16 Z"/>
<text x="1253.18" y="477.36" font-size="8" text-anchor="middle" transform="rotate(-90 1253.18 477.36)">120°</text>
<path class="tn" d="M1385.79 466.26 L1400.90 452.85"/>
<path class="tn" d="M1385.79 488.62 L1400.90 501.73"/>
<path class="tn" d="M1397.67 457.04 A31.61 31.61 0 0 1 1397.67 497.68"/>
<path class="ar" d="M1397.51 457.32 L1401.95 461.70 L1400.47 462.81 Z"/>
<path class="ar" d="M1397.51 497.41 L1400.47 491.92 L1401.95 493.03 Z"/>
<text x="1398.90" y="477.36" font-size="8" text-anchor="middle" transform="rotate(-90 1398.90 477.36)">120°</text>
<path class="tn" d="M1300.21 496.33 L1285.25 512.52"/>
<path class="tn" d="M1321.80 496.33 L1337.68 512.52"/>
<path class="tn" d="M1289.44 509.05 A32.69 32.69 0 0 0 1333.18 509.05"/>
<path class="ar" d="M1289.41 509.13 L1294.66 512.51 L1293.43 513.90 Z"/>
<path class="ar" d="M1333.36 509.13 L1329.34 513.90 L1328.12 512.51 Z"/>
<text x="1311.31" y="513.29" font-size="8" text-anchor="middle">90°</text>
<path class="tn" d="M1242.38 478.29 A68.93 68.93 0 0 0 1308.69 546.14"/>
<path class="ar" d="M1242.38 477.83 L1243.46 484.92 L1241.30 484.92 Z"/>
<path class="ar" d="M1311.00 546.14 L1303.91 547.22 L1303.91 545.06 Z"/>
<text x="1266.75" y="522.08" font-size="8" text-anchor="middle" transform="rotate(50 1266.75 522.08)">90°± 30'</text>
<path class="tn" d="M1281.70 483.22 L1281.70 509.44"/>
<path class="ar" d="M1281.70 486.62 L1282.78 492.78 L1280.62 492.78 Z"/>
<path class="ar" d="M1281.70 496.02 L1282.78 502.19 L1280.62 502.19 Z"/>
<text x="1278.16" y="505.12" font-size="9" text-anchor="middle" transform="rotate(-90 1278.16 505.12)">f</text>
<path class="tn" d="M1331.36 454.70 L1331.36 500.19"/>
<path class="ar" d="M1331.36 458.55 L1332.44 465.64 L1330.28 465.64 Z"/>
<path class="ar" d="M1331.36 496.02 L1330.28 488.93 L1332.44 488.93 Z"/>
<text x="1328.74" y="478.60" font-size="8" text-anchor="middle" transform="rotate(-90 1328.74 478.60)">b1</text>
</svg>
<div class="sep" style="top:561px"></div>

<!-- row: Bild -->
<div class="dot bl" style="left:320px;top:577px"></div>
<span class="lab" style="letter-spacing:-0.166px;left:381px;width:100px;top:574px">Bild</span>
<svg id="photo" style="left:1150px;top:582px" width="140" height="108" viewBox="0 0 1177 908">
<defs>
<linearGradient id="p-cyl" gradientUnits="userSpaceOnUse" x1="225" y1="400" x2="395" y2="750"><stop offset="0" stop-color="#6f7881"/><stop offset=".1" stop-color="#a9afb5"/><stop offset=".24" stop-color="#f7f8f8"/><stop offset=".34" stop-color="#f0f1f2"/><stop offset=".46" stop-color="#c6cace"/><stop offset=".62" stop-color="#a2a8ae"/><stop offset=".85" stop-color="#7d858d"/><stop offset="1" stop-color="#5f6770"/></linearGradient>
<linearGradient id="p-top" gradientUnits="userSpaceOnUse" x1="272" y1="272" x2="621" y2="621"><stop offset="0" stop-color="#a4aab0"/><stop offset=".3" stop-color="#b4b9be"/><stop offset=".52" stop-color="#c9cdd0"/><stop offset=".64" stop-color="#f0f1f2"/><stop offset=".7" stop-color="#d2d5d8"/><stop offset=".78" stop-color="#a1a7ad"/><stop offset="1" stop-color="#b3b8bd"/></linearGradient>
<linearGradient id="p-topr" gradientUnits="userSpaceOnUse" x1="600" y1="400" x2="1050" y2="210"><stop offset="0" stop-color="#b6bbc0"/><stop offset="1" stop-color="#8a929a"/></linearGradient>
<linearGradient id="p-cone" gradientUnits="userSpaceOnUse" x1="600" y1="330" x2="720" y2="400"><stop offset="0" stop-color="#b4b9be" stop-opacity="0"/><stop offset=".55" stop-color="#f2f3f4"/><stop offset="1" stop-color="#c9cdd0"/></linearGradient>
<linearGradient id="p-near" gradientUnits="userSpaceOnUse" x1="600" y1="430" x2="700" y2="720"><stop offset="0" stop-color="#d6d9dc"/><stop offset="1" stop-color="#b7bcc1"/></linearGradient>
<linearGradient id="p-front" gradientUnits="userSpaceOnUse" x1="430" y1="420" x2="610" y2="640"><stop offset="0" stop-color="#858e96"/><stop offset=".55" stop-color="#a9afb5"/><stop offset="1" stop-color="#c2c6ca"/></linearGradient>
<linearGradient id="p-floor" gradientUnits="userSpaceOnUse" x1="700" y1="570" x2="1010" y2="390"><stop offset="0" stop-color="#c6cacd"/><stop offset=".5" stop-color="#b0b6bb"/><stop offset=".72" stop-color="#8d969e"/><stop offset="1" stop-color="#7b858e"/></linearGradient>
<linearGradient id="p-hole" gradientUnits="userSpaceOnUse" x1="700" y1="130" x2="910" y2="150"><stop offset="0" stop-color="#8f979f"/><stop offset=".6" stop-color="#c4c8cc"/><stop offset="1" stop-color="#66707a"/></linearGradient>
<linearGradient id="p-end" gradientUnits="userSpaceOnUse" x1="60" y1="500" x2="260" y2="800"><stop offset="0" stop-color="#5f6e7c"/><stop offset="1" stop-color="#43515f"/></linearGradient>
<linearGradient id="p-thr" gradientUnits="userSpaceOnUse" x1="90" y1="560" x2="220" y2="740"><stop offset="0" stop-color="#9aa2a9"/><stop offset=".4" stop-color="#c9cdd1"/><stop offset="1" stop-color="#858d95"/></linearGradient>
<filter id="p-blur" x="-5%" y="-5%" width="110%" height="110%"><feGaussianBlur stdDeviation="4.500"/></filter>
</defs>
<g filter="url(#p-blur)">
<!-- left dark side face -->
<path d="M322 222L294 352L392 348L352 282z" fill="#64717d"/>
<!-- neck / front-left face -->
<path d="M330 250C360 320 420 340 480 395L600 420L578 560L582 700L500 705L470 600L330 350z" fill="url(#p-front)"/>
<!-- bottom of block -->
<path d="M488 688L582 700L614 754L556 735z" fill="#79828a"/>
<!-- cylinder body -->
<path d="M72 480L378 332C470 380 545 520 522 692L258 822z" fill="url(#p-cyl)"/>
<!-- chamfer band -->
<path d="M72 480L128 452C215 470 340 660 318 792L258 822z" fill="#59636d" fill-opacity=".3"/>
<path d="M128 452C215 470 340 660 318 792" fill="none" stroke="#e6e9eb" stroke-opacity=".55" stroke-width="8"/>
<!-- end face -->
<ellipse cx="160" cy="650" rx="95" ry="196" transform="rotate(-24 160 650)" fill="url(#p-end)"/>
<ellipse cx="150" cy="662" rx="63" ry="134" transform="rotate(-24 150 662)" fill="url(#p-thr)"/>
<path d="M95 600C120 640 150 700 190 735M112 568C142 610 182 680 217 713M92 642C112 682 137 722 172 752" stroke="#8b939b" stroke-width="9" fill="none" stroke-opacity=".6"/>
<!-- near face: left column -->
<path d="M600 420L642 470L642 645L614 754L580 700L576 560z" fill="url(#p-near)"/>
<!-- slot back wall -->
<path d="M640 478L694 446L694 612L640 644z" fill="#a3aab0"/>
<path d="M694 446L940 316L1040 300L1030 402L940 346L692 484z" fill="#8b939b"/>
<!-- floor of lower prong -->
<path d="M692 482L940 346C985 350 1022 375 1030 402L1012 430L700 624L690 600z" fill="url(#p-floor)"/>
<!-- hole seen in floor -->
<ellipse cx="800" cy="432" rx="62" ry="27" fill="#f6f7f8" transform="rotate(-8 800 432)"/>
<path d="M838 374L872 356L870 430L842 438z" fill="#7a848c"/>
<!-- lower strip of near face -->
<path d="M640 642L700 622L1012 428C1022 432 1026 440 1022 446L614 754z" fill="#c3c7cb"/>
<path d="M640 642L700 622L1012 428" stroke="#e4e6e8" stroke-width="7" fill="none"/>
<!-- upper strip of near face -->
<path d="M600 420L1052 190C1058 205 1060 230 1054 248L940 318L694 448L642 478z" fill="url(#p-topr)"/>
<!-- top face -->
<path d="M322 222L762 44C800 30 900 50 960 95C1010 130 1045 160 1052 190L600 420C540 410 500 395 480 392C430 345 365 320 340 262z" fill="url(#p-top)"/>
<path d="M800 100L745 50L835 42z" fill="#e6e8ea" fill-opacity=".6"/>
<!-- conical highlight -->

<path d="M322 222L762 44" stroke="#d9dcdf" stroke-width="10" fill="none"/>
<!-- top hole -->
<ellipse cx="805" cy="148" rx="108" ry="58" fill="url(#p-hole)" transform="rotate(-4 805 148)"/>
<ellipse cx="788" cy="166" rx="84" ry="36" fill="#d2d6d9" transform="rotate(-4 788 166)"/>
<path d="M872 108C902 120 906 160 880 186" stroke="#626c76" stroke-width="14" fill="none"/>
</g>
</svg>

<div class="sep" style="top:703px"></div>

<!-- row: Zubehör -->
<div class="dot bl" style="left:320px;top:719px"></div>
<span class="lab" style="letter-spacing:-0.142px;left:381px;width:100px;top:716px">Zubehör</span>
<div id="atab"></div>
<div class="arow first" style="top:710px"><i class="hl"></i><span class="cb"></span><svg class="aic" width="16" height="18" viewBox="0 0 16 18"><path d="M2.200 3.500h11.600l1.700 2.600v8.400a1 1 0 0 1-1 1h-13a1 1 0 0 1-1-1v-8.400z" fill="url(#g-boxt)" stroke="#94590f"/><path d="M2.600 4.500h10.800" stroke="#c79a5e" stroke-width=".8" fill="none"/><rect x="1" y="6.600" width="14" height="8.400" fill="url(#g-box)"/><path d="M1.500 7v7.500h13v-7.500" fill="none" stroke="#f6d2a2" stroke-opacity=".55"/><path d="M2.200 3.500h11.600l1.700 2.600v8.400a1 1 0 0 1-1 1h-13a1 1 0 0 1-1-1v-8.400z" fill="none" stroke="#94590f"/></svg><span class="atx" style="letter-spacing:-0.050px">Federklappbolzen (passend für Gabelköpfe)</span></div>
<div class="arow" style="top:735px"><i class="hl"></i><span class="cb"></span><svg class="aic" width="16" height="18" viewBox="0 0 16 18"><path d="M2.200 3.500h11.600l1.700 2.600v8.400a1 1 0 0 1-1 1h-13a1 1 0 0 1-1-1v-8.400z" fill="url(#g-boxt)" stroke="#94590f"/><path d="M2.600 4.500h10.800" stroke="#c79a5e" stroke-width=".8" fill="none"/><rect x="1" y="6.600" width="14" height="8.400" fill="url(#g-box)"/><path d="M1.500 7v7.500h13v-7.500" fill="none" stroke="#f6d2a2" stroke-opacity=".55"/><path d="M2.200 3.500h11.600l1.700 2.600v8.400a1 1 0 0 1-1 1h-13a1 1 0 0 1-1-1v-8.400z" fill="none" stroke="#94590f"/></svg><span class="atx" style="letter-spacing:0.112px">Bolzen mit Einstich für Wellensicherungen (passend für Gabelköpfe)</span></div>
<div class="arow" style="top:760px"><i class="hl"></i><span class="cb"></span><svg class="aic" width="16" height="18" viewBox="0 0 16 18"><path d="M2.200 3.500h11.600l1.700 2.600v8.400a1 1 0 0 1-1 1h-13a1 1 0 0 1-1-1v-8.400z" fill="url(#g-boxt)" stroke="#94590f"/><path d="M2.600 4.500h10.800" stroke="#c79a5e" stroke-width=".8" fill="none"/><rect x="1" y="6.600" width="14" height="8.400" fill="url(#g-box)"/><path d="M1.500 7v7.500h13v-7.500" fill="none" stroke="#f6d2a2" stroke-opacity=".55"/><path d="M2.200 3.500h11.600l1.700 2.600v8.400a1 1 0 0 1-1 1h-13a1 1 0 0 1-1-1v-8.400z" fill="none" stroke="#94590f"/></svg><span class="atx" style="letter-spacing:0.106px">Bolzen mit Splintloch (passend für Gabelköpfe)</span></div>
<div class="arow" style="top:785px"><i class="hl"></i><span class="cb"></span><svg class="aic" width="16" height="18" viewBox="0 0 16 18"><path d="M2.200 3.500h11.600l1.700 2.600v8.400a1 1 0 0 1-1 1h-13a1 1 0 0 1-1-1v-8.400z" fill="url(#g-boxt)" stroke="#94590f"/><path d="M2.600 4.500h10.800" stroke="#c79a5e" stroke-width=".8" fill="none"/><rect x="1" y="6.600" width="14" height="8.400" fill="url(#g-box)"/><path d="M1.500 7v7.500h13v-7.500" fill="none" stroke="#f6d2a2" stroke-opacity=".55"/><path d="M2.200 3.500h11.600l1.700 2.600v8.400a1 1 0 0 1-1 1h-13a1 1 0 0 1-1-1v-8.400z" fill="none" stroke="#94590f"/></svg><span class="atx" style="letter-spacing:0.099px">Bolzen mit Einstich für Sicherungsringe DIN 471 (passend für Gabelköpfe)</span></div>
<div class="arow" style="top:810px"><i class="hl"></i><span class="cb"></span><svg class="aic" width="16" height="18" viewBox="0 0 16 18"><path d="M2.200 3.500h11.600l1.700 2.600v8.400a1 1 0 0 1-1 1h-13a1 1 0 0 1-1-1v-8.400z" fill="url(#g-boxt)" stroke="#94590f"/><path d="M2.600 4.500h10.800" stroke="#c79a5e" stroke-width=".8" fill="none"/><rect x="1" y="6.600" width="14" height="8.400" fill="url(#g-box)"/><path d="M1.500 7v7.500h13v-7.500" fill="none" stroke="#f6d2a2" stroke-opacity=".55"/><path d="M2.200 3.500h11.600l1.700 2.600v8.400a1 1 0 0 1-1 1h-13a1 1 0 0 1-1-1v-8.400z" fill="none" stroke="#94590f"/></svg><span class="atx" style="letter-spacing:0.088px">Bolzen mit Einstich, ohne Kopf, für Sicherungsringe DIN 471 (passend für Gabelköpfe)</span></div>
<div class="arow" style="top:835px"><i class="hl"></i><span class="cb"></span><svg class="aic" width="16" height="18" viewBox="0 0 16 18"><path d="M2.200 3.500h11.600l1.700 2.600v8.400a1 1 0 0 1-1 1h-13a1 1 0 0 1-1-1v-8.400z" fill="url(#g-boxt)" stroke="#94590f"/><path d="M2.600 4.500h10.800" stroke="#c79a5e" stroke-width=".8" fill="none"/><rect x="1" y="6.600" width="14" height="8.400" fill="url(#g-box)"/><path d="M1.500 7v7.500h13v-7.500" fill="none" stroke="#f6d2a2" stroke-opacity=".55"/><path d="M2.200 3.500h11.600l1.700 2.600v8.400a1 1 0 0 1-1 1h-13a1 1 0 0 1-1-1v-8.400z" fill="none" stroke="#94590f"/></svg><span class="atx" style="letter-spacing:0.064px">Muttern DIN 934</span></div>
<div class="vline" style="left:529px"></div><div class="vline" style="left:554px"></div><div class="vline" style="left:579px"></div>

<div id="bbar"></div>
<div class="btn" style="letter-spacing:-0.008px;left:316px;width:24px">&gt;</div>
<div class="btn on" style="letter-spacing:0.164px;left:350px;width:96px">Alle Editieren</div>
<div class="btn" style="letter-spacing:0.217px;left:456px;width:96px">Abbrechen</div>
<div class="btn" style="letter-spacing:0.218px;left:562px;width:96px">Speichern</div>
<div id="botline"></div>

</div>
</body></html>
